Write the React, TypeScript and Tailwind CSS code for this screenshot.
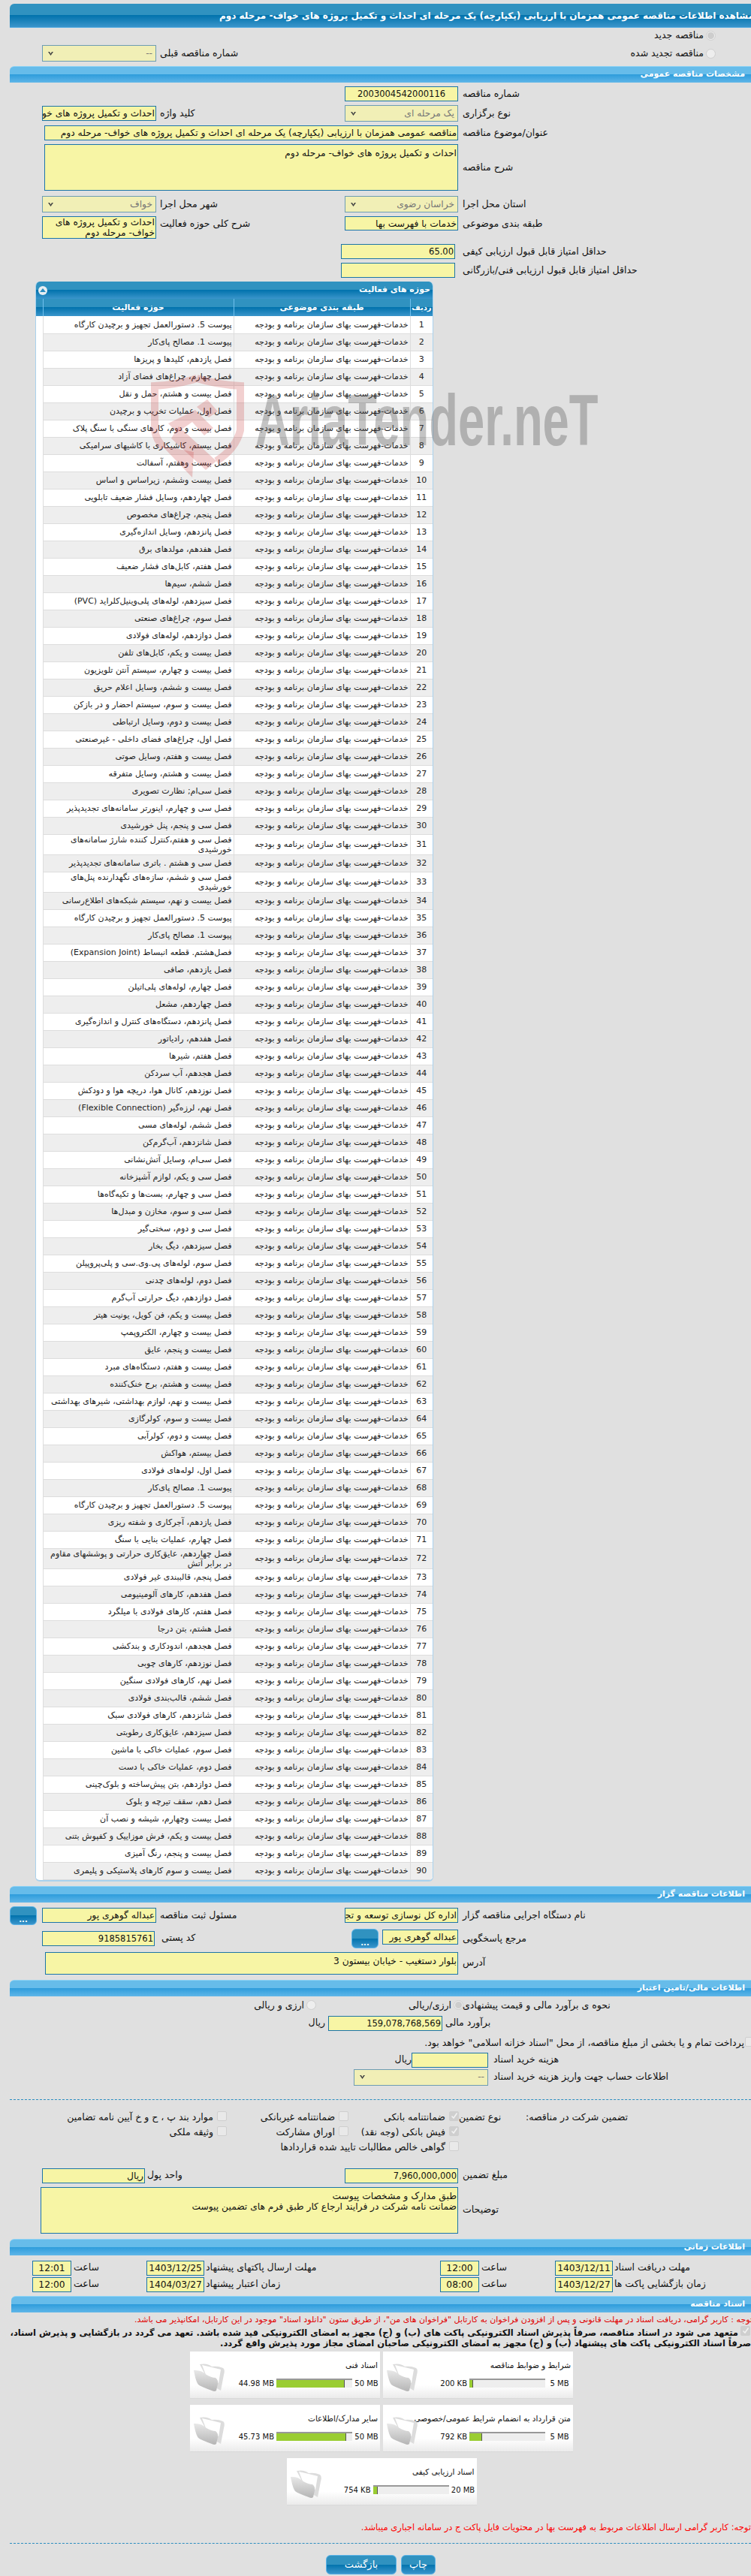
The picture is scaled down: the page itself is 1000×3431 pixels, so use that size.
import React from 'react';

const rows: string[] = [
  'پیوست 5. دستورالعمل تجهیز و برچیدن کارگاه',
  'پیوست 1. مصالح پای‌کار',
  'فصل یازدهم، کلیدها و پریزها',
  'فصل چهارم، چراغ‌های فضای آزاد',
  'فصل بیست و هشتم، حمل و نقل',
  'فصل اول، عملیات تخریب و برچیدن',
  'فصل بیست و دوم، کارهای سنگی با سنگ پلاک',
  'فصل بیستم، کاشیکاری با کاشیهای سرامیکی',
  'فصل بیست وهفتم، آسفالت',
  'فصل بیست وششم، زیراساس و اساس',
  'فصل چهاردهم، وسایل فشار ضعیف تابلویی',
  'فصل پنجم، چراغ‌های مخصوص',
  'فصل پانزدهم، وسایل اندازه‌گیری',
  'فصل هفدهم، مولدهای برق',
  'فصل هفتم، کابل‌های فشار ضعیف',
  'فصل ششم، سیم‌ها',
  'فصل سیزدهم، لوله‌های پلی‌وینیل‌کلراید (PVC)',
  'فصل سوم، چراغ‌های صنعتی',
  'فصل دوازدهم، لوله‌های فولادی',
  'فصل بیست و یکم، کابل‌های تلفن',
  'فصل بیست و چهارم، سیستم آنتن تلویزیون',
  'فصل بیست و ششم، وسایل اعلام حریق',
  'فصل بیست و سوم، سیستم احضار و در بازکن',
  'فصل بیست و دوم، وسایل ارتباطی',
  'فصل اول، چراغ‌های فضای داخلی - غیرصنعتی',
  'فصل بیست و هفتم، وسایل صوتی',
  'فصل بیست و هشتم، وسایل متفرقه',
  'فصل سی‌ام; نظارت تصویری',
  'فصل سی و چهارم، اینورتر سامانه‌های تجدیدپذیر',
  'فصل سی و پنجم، پنل خورشیدی',
  'فصل سی و هفتم،کنترل کننده شارژ سامانه‌های خورشیدی',
  'فصل سی و هشتم . باتری سامانه‌های تجدیدپذیر',
  'فصل سی و ششم، سازه‌های نگهدارنده پنل‌های خورشیدی',
  'فصل بیست و نهم، سیستم شبکه‌های اطلاع‌رسانی',
  'پیوست 5. دستورالعمل تجهیز و برچیدن کارگاه',
  'پیوست 1. مصالح پای‌کار',
  'فصل‌هشتم. قطعه انبساط (Expansion Joint)',
  'فصل یازدهم، صافی',
  'فصل چهارم، لوله‌های پلی‌اتیلن',
  'فصل چهاردهم، مشعل',
  'فصل پانزدهم، دستگاه‌های کنترل و اندازه‌گیری',
  'فصل هفدهم، رادیاتور',
  'فصل هفتم، شیرها',
  'فصل هجدهم، آب سردکن',
  'فصل نوزدهم، کانال هوا، دریچه هوا و دودکش',
  'فصل نهم، لرزه‌گیر (Flexible Connection)',
  'فصل ششم، لوله‌های مسی',
  'فصل شانزدهم، آب‌گرم‌کن',
  'فصل سی‌ام، وسایل آتش‌نشانی',
  'فصل سی و یکم، لوازم آشپزخانه',
  'فصل سی و چهارم، بست‌ها و تکیه‌گاه‌ها',
  'فصل سی و سوم، مخازن و مبدل‌ها',
  'فصل سی و دوم، سختی‌گیر',
  'فصل سیزدهم، دیگ بخار',
  'فصل سوم، لوله‌های پی.وی.سی و پلی‌پروپیلن',
  'فصل دوم، لوله‌های چدنی',
  'فصل دوازدهم، دیگ حرارتی آب‌گرم',
  'فصل بیست و یکم، فن کویل، یونیت هیتر',
  'فصل بیست و چهارم، الکتروپمپ',
  'فصل بیست و پنجم، عایق',
  'فصل بیست و هفتم، دستگاه‌های مبرد',
  'فصل بیست و هشتم، برج خنک‌کننده',
  'فصل بیست و نهم، لوازم بهداشتی، شیرهای بهداشتی',
  'فصل بیست و سوم، کولرگازی',
  'فصل بیست و دوم، کولرآبی',
  'فصل بیستم، هواکش',
  'فصل اول، لوله‌های فولادی',
  'پیوست 1. مصالح پای‌کار',
  'پیوست 5. دستورالعمل تجهیز و برچیدن کارگاه',
  'فصل یازدهم، آجرکاری و شفته ریزی',
  'فصل چهارم، عملیات بنایی با سنگ',
  'فصل چهاردهم، عایق‌کاری حرارتی و پوششهای مقاوم در برابر آتش',
  'فصل پنجم، قالببندی غیر فولادی',
  'فصل هفدهم، کارهای آلومینیومی',
  'فصل هفتم، کارهای فولادی با میلگرد',
  'فصل هشتم، بتن درجا',
  'فصل هجدهم، اندودکاری و بندکشی',
  'فصل نوزدهم، کارهای چوبی',
  'فصل نهم، کارهای فولادی سنگین',
  'فصل ششم، قالب‌بندی فولادی',
  'فصل شانزدهم، کارهای فولادی سبک',
  'فصل سیزدهم، عایق‌کاری رطوبتی',
  'فصل سوم، عملیات خاکی با ماشین',
  'فصل دوم، عملیات خاکی با دست',
  'فصل دوازدهم، بتن پیش‌ساخته و بلوک‌چینی',
  'فصل دهم، سقف تیرچه و بلوک',
  'فصل بیست وچهارم، شیشه و نصب آن',
  'فصل بیست و یکم، فرش موزاییک و کفپوش بتنی',
  'فصل بیست و پنجم، رنگ آمیزی',
  'فصل بیست و سوم کارهای پلاستیکی و پلیمری',
];

const field = 'block shrink-0 border border-[#1c75a8] bg-[#f7f5a5] text-[12.25px] leading-[18px] text-[#111] px-px overflow-hidden whitespace-nowrap';
const area = 'block shrink-0 border border-[#1c75a8] bg-[#f7f5a5] text-[12.25px] leading-[14px] text-[#111] px-px pt-1 overflow-hidden';
const darkBar = 'bg-[linear-gradient(#3092c0_0%,#3092c0_50%,#0273ad_50%,#3a95cb_100%)]';
const label = 'shrink-0 text-left text-[12.5px] text-[#111] whitespace-nowrap';

function SubHeader({ title, className }: { title: string; className: string }) {
  return (
    <div className={`ml-[13px] h-[22px] rounded-tl-md flex items-center pr-2 text-[11px] font-bold text-white border-t border-[#8fd3f5] bg-[linear-gradient(#66bcea_0%,#66bcea_48%,#2f9ddc_50%,#5fb6e8_100%)] ${className}`}>
      {title}
    </div>
  );
}

function Select({ value, className }: { value: string; className: string }) {
  return (
    <div className={`shrink-0 flex items-center justify-between border border-[#6d9db3] bg-[#f1efb6] text-[12.25px] text-[#777] pr-1 pl-1.5 ${className}`}>
      <span className="whitespace-nowrap">{value}</span>
      <svg width="9" height="7" viewBox="0 0 9 7"><path d="M1 1 L4.5 6 L8 1 L6 1 L4.5 3.4 L3 1 Z" fill="#444" /></svg>
    </div>
  );
}

function Radio({ on }: { on?: boolean }) {
  return (
    <span className="shrink-0 w-[13px] h-[13px] rounded-full border border-[#cfcfcf] bg-[#eeeeee] flex items-center justify-center">
      {on && <span className="w-[9px] h-[9px] rounded-full bg-[#cdcdcd]" />}
    </span>
  );
}

function Check({ on }: { on?: boolean }) {
  return (
    <span className={`shrink-0 w-[13px] h-[13px] -mt-[5px] rounded-[2px] border border-[#cfcfcf] flex items-center justify-center ${on ? 'bg-[#cfcfcf]' : 'bg-[#e9e9e9]'}`}>
      {on && <svg width="10" height="10" viewBox="0 0 10 10"><path d="M1.5 5.5 L4 8 L8.5 1.5" stroke="#f2f2f2" strokeWidth="1.6" fill="none" /></svg>}
    </span>
  );
}

function DotsButton({ className }: { className: string }) {
  return (
    <button className={`shrink-0 w-[36px] rounded-md border border-[#5ab3e8] text-white text-[10px] font-bold leading-none pt-3 ${darkBar} ${className}`}>...</button>
  );
}

function FolderIcon() {
  return (
    <svg width="44" height="40" viewBox="0 0 44 40" className="shrink-0">
      <defs>
        <linearGradient id="fold" x1="0" y1="0" x2="0" y2="1">
          <stop offset="0" stopColor="#e8e8e8" />
          <stop offset="1" stopColor="#b5b5b5" />
        </linearGradient>
      </defs>
      <path d="M10 3 Q20 1 26 6 Q34 5 41 8 Q44 10 42 17 L38 38 L24 30 Z" fill="#dcdcdc" />
      <path d="M13 4 L26 7 L38 10 L35 28 L20 22 Z" fill="#ffffff" />
      <path d="M2 11 Q12 10 19 17 Q26 21 31 21 Q35 24 34 29 L32 38 Q30 40 26 38 Q12 33 8 30 Q5 26 3 16 Z" fill="url(#fold)" />
    </svg>
  );
}

function DocCard({ title, used, max, pct }: { title: string; used: string; max: string; pct: number }) {
  return (
    <div className="w-[253px] h-[63px] flex justify-between bg-[linear-gradient(#ffffff_0%,#ffffff_72%,#ebebeb_100%)] border-b border-[#d9d9d9]">
      <div className="flex flex-col w-[205px] pr-[2px]">
        <div className="mt-[10px] text-[10.5px] leading-4 text-[#111] whitespace-nowrap pr-[1px]">{title}</div>
        <div className="mt-[9px] flex items-center justify-start gap-[3px] text-[10px] text-[#111] whitespace-nowrap">
          <span className="w-[32px] text-center" dir="ltr">{max}</span>
          <div className="w-[101px] h-[12px] bg-[#eeeeee] border-t-2 border-[#999999] flex justify-end">
            <div className="h-full bg-[#9acd32] border-r border-[#555555]" style={{ width: `${pct}%` }} />
          </div>
          <span dir="ltr">{used}</span>
        </div>
      </div>
      <div className="pt-[14px] pl-[3px]"><FolderIcon /></div>
    </div>
  );
}

const pageBtn = 'h-[26px] rounded-md border border-[#5ab3e8] text-white text-[13px] flex items-center justify-center';

export default function App() {
  return (
    <div dir="rtl" className="relative w-[1000px] h-[3431px] overflow-hidden bg-[#e0e0e0] font-['DejaVu_Sans','Noto_Sans',sans-serif] pt-[5px]">
      {/* page title */}
      <div className={`ml-[13px] h-[32px] rounded-tl-md flex items-center text-[12px] font-bold text-white whitespace-nowrap border-b border-[#4fa9e0] ${darkBar}`}>
        <span className="-mr-1">مشاهده اطلاعات مناقصه عمومی همزمان با ارزیابی (یکپارچه) یک مرحله ای احداث و تکمیل پروژه های خواف- مرحله دوم</span>
      </div>

      <div className="h-[23px] flex items-center pr-[47px] gap-[3px] -mt-px text-[12.5px] text-[#111]">
        <Radio on />
        <span>مناقصه جدید</span>
      </div>
      <div className="h-[24px] flex items-center pr-[47px] gap-[3px] text-[12.5px] text-[#111]">
        <Radio />
        <span>مناقصه تجدید شده</span>
        <div className="mr-auto ml-[56px] flex items-center gap-[5px]">
          <span className={label}>شماره مناقصه قبلی</span>
          <Select value="--" className="w-[152px] h-[22px]" />
        </div>
      </div>

      <SubHeader title="مشخصات مناقصه عمومی" className="mt-[5px]" />

      <div className="mt-[5px] h-[20px] flex items-center">
        <span className={`${label} w-[384px]`}>شماره مناقصه</span>
        <div className={`${field} w-[151px] h-[20px] mr-[6px] text-center !text-[11.5px]`}>2003004542000116</div>
      </div>
      <div className="mt-[5px] h-[22px] flex items-center">
        <span className={`${label} w-[384px]`}>نوع برگزاری</span>
        <Select value="یک مرحله ای" className="w-[151px] h-[22px] mr-[6px]" />
        <div className="mr-auto ml-[56px] flex items-center gap-[5px]">
          <span className={label}>کلید واژه</span>
          <div className={`${field} w-[152px] h-[20px]`}>احداث و تکمیل پروژه های خواف- مرحله دوم</div>
        </div>
      </div>
      <div className="mt-[5px] h-[20px] flex items-center">
        <span className={`${label} w-[384px]`}>عنوان/موضوع مناقصه</span>
        <div className={`${field} w-[551px] h-[20px] mr-[6px]`}>مناقصه عمومی همزمان با ارزیابی (یکپارچه) یک مرحله ای احداث و تکمیل پروژه های خواف- مرحله دوم</div>
      </div>
      <div className="mt-[5px] h-[62px] flex items-center">
        <span className={`${label} w-[384px]`}>شرح مناقصه</span>
        <div className={`${area} w-[551px] h-[62px] mr-[6px]`}>احداث و تکمیل پروژه های خواف- مرحله دوم</div>
      </div>
      <div className="mt-[7px] h-[22px] flex items-center">
        <span className={`${label} w-[384px]`}>استان محل اجرا</span>
        <Select value="خراسان رضوی" className="w-[151px] h-[22px] mr-[6px]" />
        <div className="mr-auto ml-[56px] flex items-center gap-[5px]">
          <span className={label}>شهر محل اجرا</span>
          <Select value="خواف" className="w-[152px] h-[22px]" />
        </div>
      </div>
      <div className="mt-[5px] h-[30px] flex items-start">
        <span className={`${label} w-[384px] mt-px`}>طبقه بندی موضوعی</span>
        <div className={`${field} w-[151px] h-[19px] mr-[6px]`}>خدمات با فهرست بها</div>
        <div className="mr-auto ml-[56px] flex items-start gap-[5px]">
          <span className={`${label} mt-px`}>شرح کلی حوزه فعالیت</span>
          <div className="shrink-0 w-[152px] h-[30px] border border-[#1c75a8] bg-[#f7f5a5] text-[12.25px] leading-[14px] text-[#111] px-px overflow-hidden">احداث و تکمیل پروژه های خواف- مرحله دوم</div>
        </div>
      </div>
      <div className="mt-[7px] h-[20px] flex items-center">
        <span className={`${label} w-[384px]`}>حداقل امتیاز قابل قبول ارزیابی کیفی</span>
        <div className={`${field} w-[152px] h-[20px] mr-[10px] !text-[11.5px]`}>65.00</div>
      </div>
      <div className="mt-[5px] h-[20px] flex items-center">
        <span className={`${label} w-[384px]`}>حداقل امتیاز قابل قبول ارزیابی فنی/بازرگانی</span>
        <div className={`${field} w-[152px] h-[20px] mr-[10px]`}></div>
      </div>

      {/* activity table */}
      <div className="mt-[5px] ml-[47px] mr-[423px] w-[530px] rounded-t-md rounded-b-md border-x border-b-2 border-[#a9d2ee] bg-white overflow-hidden">
        <div className={`h-[23px] flex items-center justify-between pr-[3px] pl-[3px] text-[11px] font-bold text-white ${darkBar}`}>
          <span>حوزه های فعالیت</span>
          <span className="w-[12px] h-[12px] rounded-full bg-[#e8eef2] flex items-center justify-center">
            <svg width="8" height="5" viewBox="0 0 8 5"><path d="M0 5 L4 0 L8 5 Z" fill="#2c8ec0" /></svg>
          </span>
        </div>
        <table className="w-full table-fixed border-collapse text-[11px] leading-[13px] text-[#222]">
          <colgroup>
            <col className="w-[30px]" />
            <col className="w-[235px]" />
            <col className="w-[254px]" />
            <col className="w-[10px]" />
          </colgroup>
          <thead>
            <tr className={`h-[23px] text-white text-[11px] font-bold ${darkBar}`}>
              <th className="font-bold text-[10px] whitespace-nowrap border-l border-[#6fc0ee]">ردیف</th>
              <th className="font-bold border-l border-[#6fc0ee]">طبقه بندی موضوعی</th>
              <th className="font-bold border-l border-[#6fc0ee]">حوزه فعالیت</th>
              <th></th>
            </tr>
          </thead>
          <tbody>
            {rows.map((r, i) => (
              <tr key={i} className={`h-[23px] ${i % 2 ? 'bg-[#eeeeee]' : 'bg-white'}`}>
                <td className="text-center text-[11px] border-l border-b border-[#dddddd]">{i + 1}</td>
                <td className="pr-[2px] border-l border-b border-[#dddddd]">خدمات-فهرست بهای سازمان برنامه و بودجه</td>
                <td className="pr-[2px] border-l border-b border-[#dddddd]">{r}</td>
                <td className="bg-white"></td>
              </tr>
            ))}
          </tbody>
        </table>
      </div>

      <SubHeader title="اطلاعات مناقصه گزار" className="mt-[6px]" />

      <div className="mt-[5px] h-[25px] flex items-center">
        <span className={`${label} w-[384px]`}>نام دستگاه اجرایی مناقصه گزار</span>
        <div className={`${field} w-[151px] h-[20px] mr-[6px]`}>اداره کل نوسازی  توسعه و تجهیز مدارس</div>
        <div className="mr-auto ml-[13px] flex items-center gap-[5px]">
          <span className={label}>مسئول ثبت مناقصه</span>
          <div className={`${field} w-[152px] h-[20px]`}>عبداله گوهری پور</div>
          <DotsButton className="h-[25px] ml-0 mr-[2px]" />
        </div>
      </div>
      <div className="mt-[5px] h-[26px] flex items-start">
        <span className={`${label} w-[384px] mt-[4px]`}>مرجع پاسخگویی</span>
        <div className={`${field} w-[101px] h-[20px] mr-[6px] mt-px`}>عبداله گوهری پور</div>
        <DotsButton className="h-[26px] mr-[5px]" />
        <div className="mr-auto ml-[56px] mt-[3px] flex items-center gap-[9px]">
          <span className={label}>کد پستی</span>
          <div className={`${field} w-[150px] h-[20px] !text-[11.5px]`}>9185815761</div>
        </div>
      </div>
      <div className="mt-[5px] h-[30px] flex items-center">
        <span className={`${label} w-[384px]`}>آدرس</span>
        <div className={`${area} w-[550px] h-[30px] mr-[6px]`}>بلوار دستغیب - خیابان بیستون 3</div>
      </div>

      <SubHeader title="اطلاعات مالی/تامین اعتبار" className="mt-[7px]" />

      <div className="mt-[2px] h-[22px] flex items-center text-[12.5px] text-[#111]">
        <span className={`${label} w-[384px]`}>نحوه ی برآورد مالی و قیمت پیشنهادی</span>
        <span className="mr-[-1px] ml-[3px] -mt-[3px]"><Radio on /></span>
        <span className="w-[180px]">ارزی/ریالی</span>
        <span className="ml-[3px] -mt-[3px]"><Radio /></span>
        <span>ارزی و ریالی</span>
      </div>
      <div className="mt-[2px] h-[20px] flex items-center">
        <span className={`${label} w-[407px]`}>برآورد مالی</span>
        <div className={`${field} w-[152px] h-[20px] mr-[4px] !text-[11.5px]`}>159,078,768,569</div>
        <span className="text-[12.5px] text-[#111] mr-[4px]">ریال</span>
      </div>
      <div className="mt-[7px] h-[20px] flex items-center text-[12.5px] text-[#111] whitespace-nowrap -mr-[5px]">
        <Check />
        <span className="mr-[1px]">پرداخت تمام و یا بخشی از مبلغ مناقصه، از محل "اسناد خزانه اسلامی" خواهد بود.</span>
      </div>
      <div className="mt-[2px] h-[20px] flex items-center">
        <span className={`${label} w-[343px]`}>هزینه خرید اسناد</span>
        <div className={`${field} w-[102px] h-[20px] mr-[7px]`}></div>
        <span className="text-[12.5px] text-[#111]">ریال</span>
      </div>
      <div className="mt-[2px] h-[22px] flex items-center">
        <span className={`${label} w-[343px]`}>اطلاعات حساب جهت واریز هزینه خرید اسناد</span>
        <Select value="--" className="w-[179px] h-[22px] mr-[7px]" />
      </div>

      <div className="ml-[13px] mt-[18px] border-t border-dashed border-[#2c8ec0]" />

      {/* guarantee */}
      <div className="mt-[14px] h-[20px] flex items-center text-[12.5px] text-[#111] whitespace-nowrap">
        <span className="w-[300px] text-left">تضمین شرکت در مناقصه:</span>
        <span className="w-[89px] text-left">نوع تضمین</span>
        <span className="w-[147px] flex items-center gap-[5px]"><Check on />ضمانتنامه بانکی</span>
        <span className="w-[162px] flex items-center gap-[5px]"><Check />ضمانتنامه غیربانکی</span>
        <span className="flex items-center gap-[5px]"><Check />موارد بند پ ، ح و خ آیین نامه تضامین</span>
      </div>
      <div className="h-[20px] flex items-center text-[12.5px] text-[#111] whitespace-nowrap pr-[389px]">
        <span className="w-[147px] flex items-center gap-[5px]"><Check on />فیش بانکی (وجه نقد)</span>
        <span className="w-[162px] flex items-center gap-[5px]"><Check />اوراق مشارکت</span>
        <span className="flex items-center gap-[5px]"><Check />وثیقه ملکی</span>
      </div>
      <div className="h-[20px] flex items-center text-[12.5px] text-[#111] whitespace-nowrap pr-[389px]">
        <span className="flex items-center gap-[5px]"><Check />گواهی خالص مطالبات تایید شده قراردادها</span>
      </div>

      <div className="mt-[17px] h-[20px] flex items-center">
        <span className={`${label} w-[384px]`}>مبلغ تضمین</span>
        <div className={`${field} w-[151px] h-[20px] mr-[6px] !text-[11.5px]`}>7,960,000,000</div>
        <div className="mr-auto ml-[56px] flex items-center gap-[3px]">
          <span className={label}>واحد پول</span>
          <div className={`${field} w-[137px] h-[20px]`}>ریال</div>
        </div>
      </div>
      <div className="mt-[5px] h-[62px] flex items-center">
        <span className={`${label} w-[384px]`}>توضیحات</span>
        <div className={`${area} w-[556px] h-[62px] mr-[6px]`}>
          طبق مدارک و مشخصات پیوست
          <br />
          ضمانت نامه شرکت در فرایند ارجاع کار طبق فرم های تضمین پیوست
        </div>
      </div>

      <SubHeader title="اطلاعات زمانی" className="mt-[7px]" />

      <div className="mt-[7px] h-[20px] flex items-center">
        <span className={`${label} w-[182px]`}>مهلت دریافت اسناد</span>
        <div className={`${field} w-[77px] h-[20px] mr-[2px] text-center`}>1403/12/11</div>
        <span className={`${label} w-[98px]`}>ساعت</span>
        <div className={`${field} w-[52px] h-[20px] mr-[3px] text-center`}>12:00</div>
        <span className={`${label} w-[312px]`}>مهلت ارسال پاکتهای پیشنهاد</span>
        <div className={`${field} w-[77px] h-[20px] mr-[2px] text-center`}>1403/12/25</div>
        <span className={`${label} w-[97px]`}>ساعت</span>
        <div className={`${field} w-[52px] h-[20px] mr-[3px] text-center`}>12:01</div>
      </div>
      <div className="mt-[2px] h-[20px] flex items-center">
        <span className={`${label} w-[182px]`}>زمان بازگشایی پاکت ها</span>
        <div className={`${field} w-[77px] h-[20px] mr-[2px] text-center`}>1403/12/27</div>
        <span className={`${label} w-[98px]`}>ساعت</span>
        <div className={`${field} w-[52px] h-[20px] mr-[3px] text-center`}>08:00</div>
        <span className={`${label} w-[312px]`}>زمان اعتبار پیشنهاد</span>
        <div className={`${field} w-[77px] h-[20px] mr-[2px] text-center`}>1404/03/27</div>
        <span className={`${label} w-[97px]`}>ساعت</span>
        <div className={`${field} w-[52px] h-[20px] mr-[3px] text-center`}>12:00</div>
      </div>

      {/* documents */}
      <SubHeader title="اسناد مناقصه" className="mt-[5px] ml-[15px]" />
      <div className="mt-[3px] h-[14px] text-[11px] leading-[14px] text-[#e00000] whitespace-nowrap -mr-[2px]">
        توجه : کاربر گرامی، دریافت اسناد در مهلت قانونی و پس از افزودن فراخوان به کارتابل "فراخوان های من"، از طریق ستون "دانلود اسناد" موجود در این کارتابل، امکانپذیر می باشد.
      </div>
      <div className="mt-[3px] text-[11.5px] font-bold leading-[14px] text-[#111] whitespace-nowrap">
        <div className="flex items-center pr-[1px]">
          <Check on />
          <span className="mr-[3px]">متعهد می شود در اسناد مناقصه، صرفاً پذیرش اسناد الکترونیکی پاکت های (ب) و (ج) مجهز به امضای الکترونیکی قید شده باشد. تعهد می گردد در بازگشایی و پذیرش اسناد،</span>
        </div>
        <div>صرفاً اسناد الکترونیکی پاکت های پیشنهاد (ب) و (ج) مجهز به امضای الکترونیکی صاحبان امضای مجاز مورد پذیرش واقع گردد.</div>
      </div>

      <div className="mt-[4px] mr-[237px] w-[510px] flex flex-wrap justify-center gap-x-[4px] gap-y-[8px]">
        <DocCard title="شرایط و ضوابط مناقصه" used="200 KB" max="5 MB" pct={5} />
        <DocCard title="اسناد فنی" used="44.98 MB" max="50 MB" pct={90} />
        <DocCard title="متن قرارداد به انضمام شرایط عمومی/خصوصی" used="792 KB" max="5 MB" pct={17} />
        <DocCard title="سایر مدارک/اطلاعات" used="45.73 MB" max="50 MB" pct={92} />
        <DocCard title="اسناد ارزیابی کیفی" used="754 KB" max="20 MB" pct={6} />
      </div>

      <div className="mt-[22px] h-[14px] text-[11.5px] leading-[14px] text-[#ff0000] whitespace-nowrap">
        توجه: کاربر گرامی ارسال اطلاعات مربوط به فهرست بها در محتویات فایل پاکت ج در سامانه اجباری میباشد.
      </div>

      <div className="ml-[13px] mt-[14px] border-t border-dashed border-[#2c8ec0]" />

      <div className="mt-[15px] mr-[420px] flex gap-[6px]">
        <button className={`${pageBtn} w-[46px] ${darkBar}`}>چاپ</button>
        <button className={`${pageBtn} w-[94px] ${darkBar}`}>بازگشت</button>
      </div>

      {/* watermark */}
      <svg width="130" height="140" viewBox="0 0 130 140" className="absolute left-[198px] top-[498px] pointer-events-none">
        <g fill="none" stroke="#c83c3c" strokeOpacity="0.24" strokeWidth="10">
          <path d="M64 6 Q40 14 8 16 L8 75 Q10 88 20 98 M64 6 Q90 14 122 16 L122 75 Q116 100 90 116" />
        </g>
        <g fill="#c83c3c" fillOpacity="0.24">
          <path d="M26 66 L62 48 L86 72 L74 82 L58 64 L38 78 Z" />
          <path d="M64 44 L78 34 L92 50 L80 58 Z" />
          <path d="M40 70 L90 116 L76 128 L30 86 Z" />
          <path d="M18 96 L58 138 L60 104 Z" />
        </g>
      </svg>
      <div dir="ltr" className="absolute left-[340px] top-[500px] pointer-events-none origin-left scale-x-[0.66] whitespace-nowrap font-['Liberation_Sans',sans-serif] font-bold text-[96px] leading-[120px] text-[#555555]/35">
        AriaTender.neT
      </div>
    </div>
  );
}
